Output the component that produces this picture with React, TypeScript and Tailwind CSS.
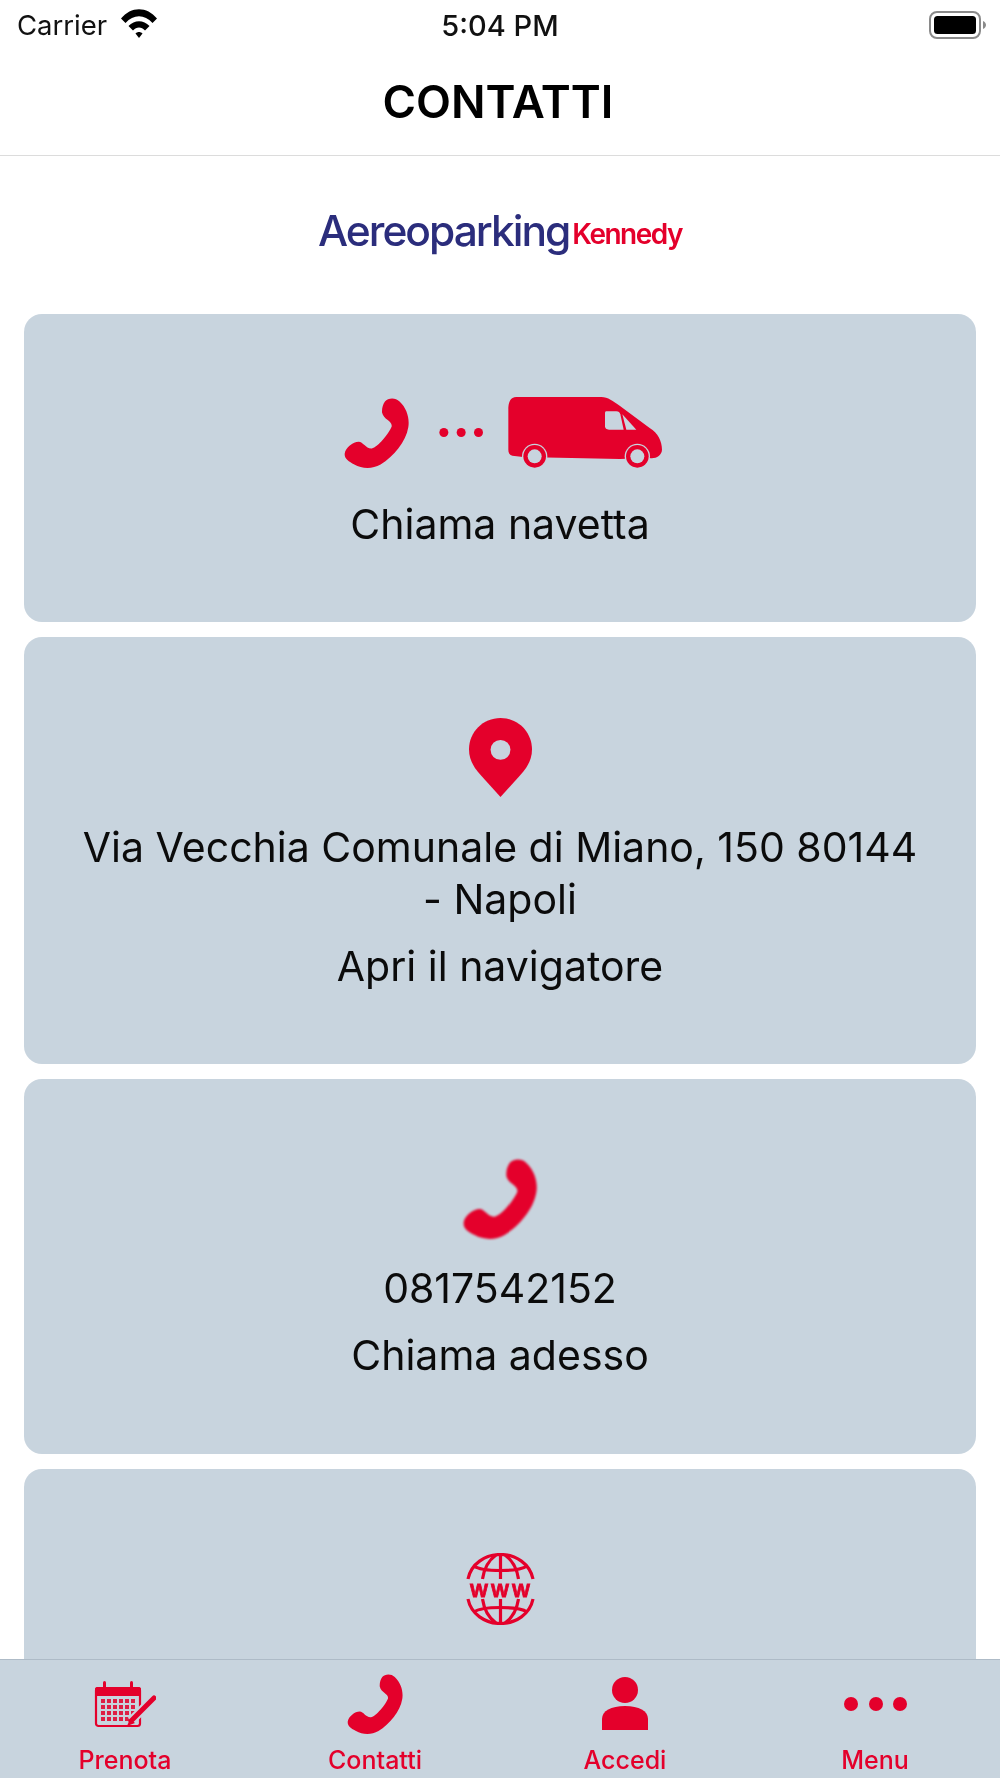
import React from "react";

const RED = "#e4002b";
const CARD = "#c8d4de";

function PhoneIcon({ className }: { className: string }) {
    return (
        <svg viewBox="0 0 222 240" className={className} fill={RED}>
            <path d="M140 12C150 0 175-3 190 12C215 35 225 70 220 100C212 150 170 200 125 228C95 245 60 242 35 228C15 218 0 208 2 190C5 170 30 150 50 150C65 150 75 175 95 173C115 170 155 120 163 98C166 78 135 75 130 50C129 35 133 22 140 12Z" />
        </svg>
    );
}

function ShuttleIcons() {
    return (
        <div className="flex h-[80px] items-center pb-[3px] pl-[6px]">
            <PhoneIcon className="h-[70px] w-[65px]" />
            <svg viewBox="0 0 127 26" className="ml-[30px] h-[13px] w-[44px]" fill={RED}>
                <circle cx="14" cy="13" r="13" />
                <circle cx="64" cy="13" r="13" />
                <circle cx="114" cy="13" r="13" />
            </svg>
            <svg viewBox="565 52 462 213" className="ml-[25px] h-[71px] w-[154px]">
                <path
                    fill={RED}
                    d="M590 52H845C865 52 880 65 900 78L990 145C1015 160 1027 185 1027 210C1026 228 1008 238 990 235L900 238L610 232L578 228C570 226 566 220 566 210V90C566 68 572 52 590 52Z"
                />
                <path fill={CARD} d="M860 95H890C897 95 900 98 902 104L912 150H868C860 150 856 146 856 140V100C856 97 858 95 860 95Z" />
                <path fill={CARD} d="M908 104L950 150H920Z" />
                <circle cx="645" cy="230" r="38" fill={CARD} />
                <circle cx="645" cy="230" r="34" fill={RED} />
                <circle cx="645" cy="230" r="21" fill={CARD} />
                <circle cx="953" cy="230" r="38" fill={CARD} />
                <circle cx="953" cy="230" r="34" fill={RED} />
                <circle cx="953" cy="230" r="21" fill={CARD} />
            </svg>
        </div>
    );
}

function PinIcon() {
    return (
        <div className="flex h-[80px] items-center">
            <svg viewBox="0 0 190 238" className="h-[79px] w-[63px]">
                <path fill={RED} d="M95 0C148 0 190 42 190 95C190 125 175 150 155 172L95 238L35 172C15 150 0 125 0 95C0 42 42 0 95 0Z" />
                <circle cx="95" cy="96" r="30" fill={CARD} />
            </svg>
        </div>
    );
}

function GlobeIcon() {
    return (
        <div className="flex h-[80px] items-center">
            <svg viewBox="0 0 69 72" className="h-[72px] w-[69px]" fill="none" stroke={RED} strokeWidth="3.2">
                <path d="M2 26C5 11 19 1.500 34.500 1.500C50 1.500 64 11 67 26" />
                <path d="M2 46C5 61 19 70.500 34.500 70.500C50 70.500 64 61 67 46" />
                <path d="M34.500 1.500V26M34.500 46V70.500" />
                <path d="M30 2C23 7 18 16 16.500 26M39 2C46 7 51 16 52.500 26" />
                <path d="M30 70C23 65 18 56 16.500 46M39 70C46 65 51 56 52.500 46" />
                <path d="M8 13C16 19 53 19 61 13M8 59C16 53 53 53 61 59" />
                <text
                    x="35.500"
                    y="43.500"
                    textAnchor="middle"
                    fill={RED}
                    stroke={RED}
                    strokeWidth="0.8"
                    fontFamily="'Liberation Sans', sans-serif"
                    fontWeight="700"
                    fontSize="19"
                    letterSpacing="3"
                >
                    WWW
                </text>
            </svg>
        </div>
    );
}

function CalendarIcon() {
    return (
        <svg viewBox="0 0 62 47" className="h-[47px] w-[62px]">
            <path fill={RED} d="M3 6H45C46.500 6 47 7 47 8V15H1V8C1 7 1.500 6 3 6Z" />
            <rect x="2" y="7" width="44" height="38" rx="2.500" fill="none" stroke={RED} strokeWidth="2.200" />
            <rect x="9" y="0" width="3" height="10" rx="1.500" fill={RED} />
            <rect x="36" y="0" width="3" height="10" rx="1.500" fill={RED} />
            <g fill={RED} opacity="0.85">
                {[18, 24, 30, 36].map((y) =>
                    [7, 13, 19, 25, 31, 37].map((x) => <rect key={`${x}-${y}`} x={x} y={y} width="4" height="4" />)
                )}
            </g>
            <path d="M37 40L60 17" stroke={CARD} strokeWidth="9" />
            <path d="M37 40L60 17" stroke={RED} strokeWidth="5" strokeLinecap="round" />
            <path d="M33 45L36 38L41 42Z" fill={RED} />
        </svg>
    );
}

function PersonIcon() {
    return (
        <svg viewBox="0 0 46 53" className="mb-[2px] h-[53px] w-[46px]" fill={RED}>
            <circle cx="23" cy="13" r="13" />
            <path d="M0 53V42C0 34 9 29 23 29C37 29 46 34 46 42V53Z" />
        </svg>
    );
}

function DotsIcon() {
    return (
        <svg viewBox="0 0 63 14" className="h-[14px] w-[63px]" fill={RED}>
            <circle cx="7" cy="7" r="7" />
            <circle cx="32" cy="7" r="7" />
            <circle cx="56" cy="7" r="7" />
        </svg>
    );
}

function Card({ icon, children }: { icon: React.ReactNode; children: React.ReactNode }) {
    return (
        <div className="mb-[15px] flex flex-col items-center rounded-[18px] bg-[#c8d4de] px-[50px] pt-[80px] pb-[72px] text-center text-[41px] leading-[52px] text-[#0b0b0b]">
            {icon}
            {children}
        </div>
    );
}

function Tab({ icon, label }: { icon: React.ReactNode; label: string }) {
    return (
        <div className="flex flex-1 flex-col items-center">
            <div className="flex h-[62px] items-center justify-center">{icon}</div>
            <span className="mt-[11px] text-[25px] leading-[28px] font-medium text-[#e4002b]">{label}</span>
        </div>
    );
}

export default function App() {
    return (
        <div className="flex h-[1778px] w-[1000px] flex-col overflow-hidden bg-white font-['Inter',sans-serif] blur-[0.4px]">
            <div className="flex h-[50px] items-center justify-between pr-[14px] pl-[17px]">
                <div className="flex items-center gap-[14px]">
                    <span className="text-[27.500px] leading-[50px] text-[#111]">Carrier</span>
                    <svg viewBox="0 0 36 29" className="mb-[3px] h-[29px] w-[36px]" fill="#000">
                        <path d="M0 9.500C10-3 26-3 36 9.500L31.500 14C23.500 5 12.500 5 4.500 14Z" />
                        <path d="M7.500 17C13.500 10.500 22.500 10.500 28.500 17L24 21.500C20.500 17.500 15.500 17.500 12 21.500Z" />
                        <path d="M14.500 24.500C16.500 22.500 19.500 22.500 21.500 24.500L18 29Z" />
                    </svg>
                </div>
                <svg viewBox="0 0 57 28" className="h-[28px] w-[57px]">
                    <rect x="1" y="1" width="50" height="26" rx="7" fill="none" stroke="#8a8a8a" strokeWidth="2" />
                    <rect x="5" y="5" width="42" height="18" rx="3.500" fill="#000" />
                    <path d="M54 10C56 11 57 12.500 57 14C57 15.500 56 17 54 18Z" fill="#8a8a8a" />
                </svg>
            </div>
            <div className="relative">
                <span className="absolute -top-[49px] left-0 w-full text-center text-[29px] leading-[50px] font-medium text-[#111]">5:04 PM</span>
            </div>
            <div className="flex h-[106px] items-center justify-center border-b border-[#dcdcdc] pr-[4px] pb-[2px]">
                <h1 className="text-[45.500px] leading-none font-semibold text-black">CONTATTI</h1>
            </div>
            <div className="min-h-0 flex-1 overflow-hidden px-[24px]">
                <div className="flex h-[158px] items-end justify-center pb-[63px]">
                    <span className="text-[42.500px] leading-[41px] font-medium tracking-[-2px] text-[#2b2d7c]">Aereoparking</span>
                    <span className="ml-[3px] text-[28px] leading-[34px] font-semibold tracking-[-1.500px] text-[#e4002b]">Kennedy</span>
                </div>
                <Card icon={<ShuttleIcons />}>
                    <div className="mt-[24px]">Chiama navetta</div>
                </Card>
                <Card icon={<PinIcon />}>
                    <div className="mt-[24px]">Via Vecchia Comunale di Miano, 150 80144 - Napoli</div>
                    <div className="mt-[15px]">Apri il navigatore</div>
                </Card>
                <Card icon={<div className="flex h-[80px] items-center blur-[0.8px]"><PhoneIcon className="h-[80px] w-[74px]" /></div>}>
                    <div className="mt-[23px]">0817542152</div>
                    <div className="mt-[15px] mb-[1px]">Chiama adesso</div>
                </Card>
                <Card icon={<GlobeIcon />}>
                    <div className="mt-[24px]">&nbsp;</div>
                </Card>
            </div>
            <div className="flex h-[119px] border-t border-[#aebbc7] bg-[#c8d4de] pt-[13px]">
                <Tab icon={<CalendarIcon />} label="Prenota" />
                <Tab icon={<PhoneIcon className="h-[60px] w-[56px]" />} label="Contatti" />
                <Tab icon={<PersonIcon />} label="Accedi" />
                <Tab icon={<DotsIcon />} label="Menu" />
            </div>
        </div>
    );
}
